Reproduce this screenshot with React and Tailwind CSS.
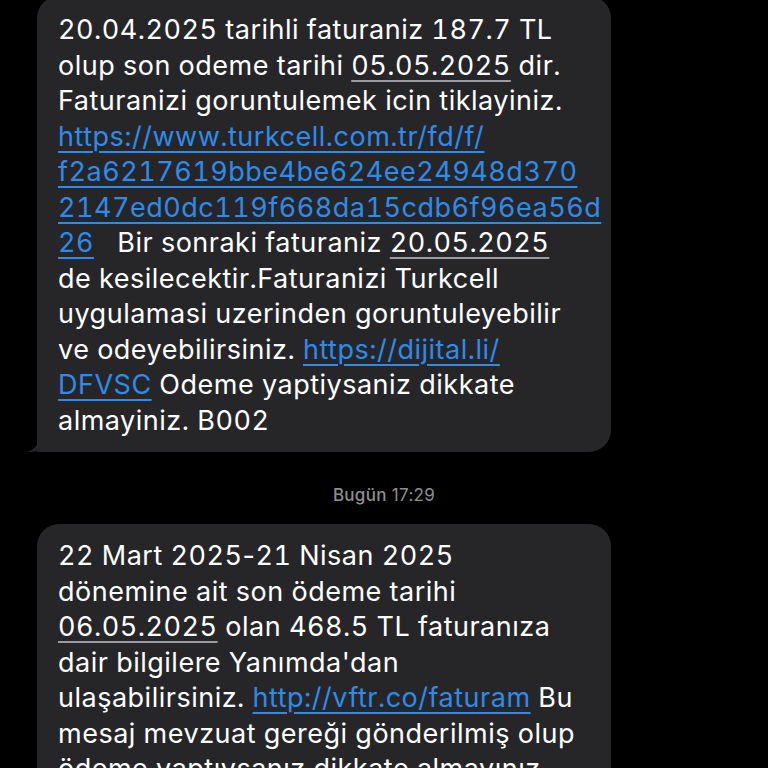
import React from 'react'

const font = { fontFamily: 'Inter, "Noto Sans", sans-serif' }

function Link({ children }) {
  return <span className="text-[#2f8bea] underline decoration-[1.5px] underline-offset-[5px]">{children}</span>
}

function DateText({ children }) {
  return <span className="underline decoration-[#9a9aa0] decoration-[1.5px] underline-offset-[5px]">{children}</span>
}

function Bubble({ lines, tail, className = '' }) {
  return (
    <div className={`relative ml-[37px] w-[574px] bg-[#262628] rounded-[22px] pl-[21px] ${tail ? 'rounded-bl-none' : ''} ${className}`}>
      {lines.map((l, i) => (
        <div key={i} className="whitespace-nowrap">{l}</div>
      ))}
      {tail && (
        <svg className="absolute left-[-10px] bottom-0" width="24" height="22" viewBox="0 0 24 22">
          <path d="M10 0 L10 13 C10 17 6 20 0 22 C6 22.5 11 21 14.5 18.5 C17 20.5 20 21.5 24 22 L24 0 Z" fill="#262628" />
        </svg>
      )}
    </div>
  )
}

export default function App() {
  const first = [
    '20.04.2025 tarihli faturaniz 187.7 TL',
    <>olup son odeme tarihi <DateText>05.05.2025</DateText> dir.</>,
    'Faturanizi goruntulemek icin tiklayiniz.',
    <Link>https://www.turkcell.com.tr/fd/f/</Link>,
    <Link>f2a6217619bbe4be624ee24948d370</Link>,
    <Link>2147ed0dc119f668da15cdb6f96ea56d</Link>,
    <><Link>26</Link>{'\u00a0\u00a0 '}Bir sonraki faturaniz <DateText>20.05.2025</DateText></>,
    'de kesilecektir.Faturanizi Turkcell',
    'uygulamasi uzerinden goruntuleyebilir',
    <>ve odeyebilirsiniz. <Link>https://dijital.li/</Link></>,
    <><Link>DFVSC</Link> Odeme yaptiysaniz dikkate</>,
    'almayiniz. B002',
  ]
  const second = [
    <>22 Mart 2025<span className="normal-nums">-</span>21 Nisan 2025</>,
    'dönemine ait son ödeme tarihi',
    <><DateText>06.05.2025</DateText> olan 468.5 TL faturanıza</>,
    "dair bilgilere Yanımda'dan",
    <>ulaşabilirsiniz. <Link>http://vftr.co/faturam</Link> Bu</>,
    'mesaj mevzuat gereği gönderilmiş olup',
    'ödeme yaptıysanız dikkate almayınız.',
  ]
  return (
    <div className="w-[768px] h-[768px] overflow-hidden bg-black text-white" style={font}>
      <div className="text-[27px] leading-[35.5px] tracking-[0.5px] tabular-nums">
        <Bubble lines={first} tail className="-mt-[4px] pt-[16px] pb-[14px]" />
      </div>
      <div className="pt-[32px] pb-[18px] text-center text-[17px] leading-[22px] tracking-[0.3px] text-[#8e8e93]">
        <span className="font-medium">Bugün</span> 17:29
      </div>
      <div className="text-[27px] leading-[35.5px] tracking-[0.5px] tabular-nums">
        <Bubble lines={second} className="pt-[14px] pb-[14px]" />
      </div>
    </div>
  )
}
